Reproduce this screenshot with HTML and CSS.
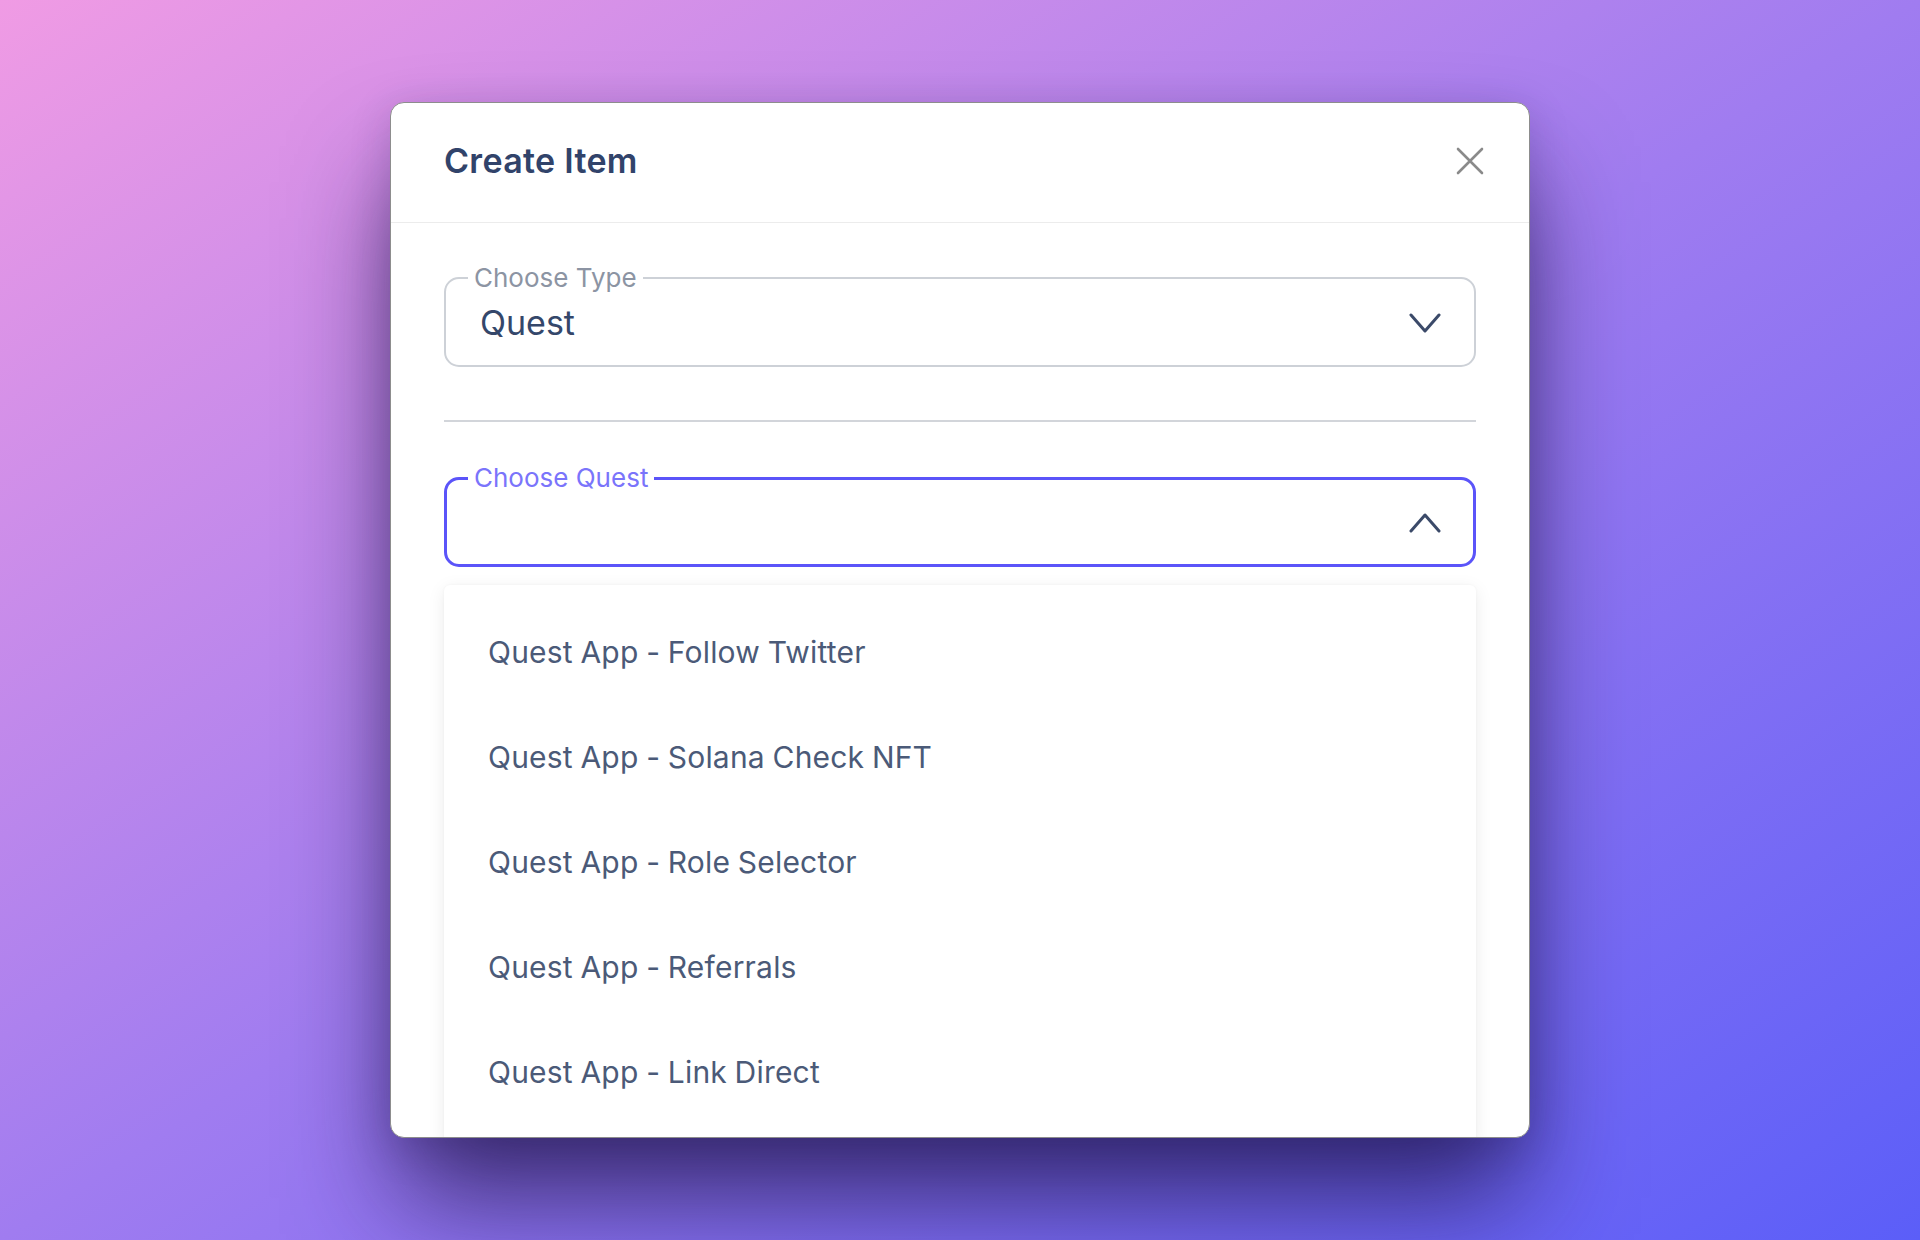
FILE: index.html
```html
<!DOCTYPE html>
<html lang="en">
<head>
<meta charset="utf-8">
<title>Create Item</title>
<link rel="stylesheet" href="styles.css">
</head>
<body>
<div class="backdrop">
  <div class="modal" role="dialog" aria-labelledby="modal-title">
    <header class="modal-header">
      <h2 id="modal-title" class="modal-title">Create Item</h2>
      <button class="close-btn" aria-label="Close">
        <svg width="28" height="28" viewBox="0 0 28 28" fill="none" stroke="#8a8a8a" stroke-width="2.6" stroke-linecap="round"><path d="M2 2 L26 26 M26 2 L2 26"/></svg>
      </button>
    </header>
    <div class="modal-body">
      <fieldset class="field">
        <legend class="field-label">Choose Type</legend>
        <div class="field-row">
          <span class="field-value">Quest</span>
          <svg class="chevron" width="32" height="22" viewBox="0 0 32 22" fill="none" stroke="#3b4a69" stroke-width="3" stroke-linecap="round" stroke-linejoin="round"><path d="M2 3 L16 19 L30 3"/></svg>
        </div>
      </fieldset>
      <hr class="divider">
      <fieldset class="field field-focused">
        <legend class="field-label">Choose Quest</legend>
        <div class="field-row">
          <span class="field-value"></span>
          <svg class="chevron" width="32" height="22" viewBox="0 0 32 22" fill="none" stroke="#3b4a69" stroke-width="3" stroke-linecap="round" stroke-linejoin="round"><path d="M2 19 L16 3 L30 19"/></svg>
        </div>
      </fieldset>
      <ul class="menu">
        <li class="menu-item">Quest App - Follow Twitter</li>
        <li class="menu-item">Quest App - Solana Check NFT</li>
        <li class="menu-item">Quest App - Role Selector</li>
        <li class="menu-item">Quest App - Referrals</li>
        <li class="menu-item">Quest App - Link Direct</li>
      </ul>
    </div>
  </div>
</div>
</body>
</html>
```

FILE: styles.css
```css
* { box-sizing: border-box; }

html, body {
  margin: 0;
  padding: 0;
}

body {
  font-family: Inter, "Noto Sans", sans-serif;
  width: 1920px;
  height: 1240px;
  overflow: hidden;
}

.backdrop {
  width: 1920px;
  height: 1240px;
  background: linear-gradient(to bottom right, #f09be4 0%, #a07cf0 50%, #5b5ef8 100%);
  display: flex;
  align-items: center;
  justify-content: center;
}

.modal {
  width: 1140px;
  height: 1036px;
  background: #ffffff;
  border: 1px solid #8d8d8d;
  border-radius: 14px;
  overflow: hidden;
  display: flex;
  flex-direction: column;
  box-shadow: 0 70px 110px -10px rgba(28, 18, 70, 0.75), 0 10px 40px rgba(35, 25, 90, 0.2);
}

.modal-header {
  height: 120px;
  flex: none;
  display: flex;
  align-items: center;
  justify-content: space-between;
  padding: 0 45px 4px 53px;
  border-bottom: 1px solid #ececec;
}

.modal-title {
  margin: 0;
  font-size: 34px;
  font-weight: 600;
  color: #31436a;
  letter-spacing: 0.3px;
}

.close-btn {
  background: none;
  border: 0;
  padding: 0;
  width: 28px;
  height: 28px;
  display: flex;
  align-items: center;
  justify-content: center;
  cursor: pointer;
}

.modal-body {
  flex: 1;
  display: flex;
  flex-direction: column;
  padding: 42px 53px 0 53px;
}

.field {
  margin: 0;
  padding: 0;
  border: 2px solid #cdd1d7;
  border-radius: 15px;
  min-width: 0;
}

.field-label {
  margin-left: 22px;
  padding: 0 6px;
  font-size: 26px;
  line-height: 26px;
  color: #8c94a3;
}

.field-row {
  height: 74px;
  display: flex;
  align-items: center;
  justify-content: space-between;
  padding: 0 33px 10px 34px;
}

.field-value {
  font-size: 34px;
  line-height: 40px;
  color: #34476a;
}

.chevron {
  flex: none;
}

.divider {
  margin: 53px 0 0 0;
  border: 0;
  height: 2px;
  background: #d2d5da;
}

.field-focused {
  margin-top: 43px;
  border: 3px solid #5b54f9;
}

.field-focused .field-label {
  margin-left: 21px;
  color: #7a74fb;
}

.field-focused .field-row {
  height: 73px;
  padding-right: 32px;
}

.menu {
  list-style: none;
  margin: 18px 0 0 0;
  padding: 15px 0 16px 0;
  flex: 1;
  background: #ffffff;
  border-radius: 6px 6px 0 0;
  box-shadow: 0 4px 18px rgba(0, 0, 0, 0.08), 0 0 3px rgba(0, 0, 0, 0.04);
}

.menu-item {
  height: 105px;
  line-height: 105px;
  padding-left: 44px;
  font-size: 30px;
  letter-spacing: 0.2px;
  word-spacing: -1px;
  color: #4b5a78;
  white-space: nowrap;
}
```
